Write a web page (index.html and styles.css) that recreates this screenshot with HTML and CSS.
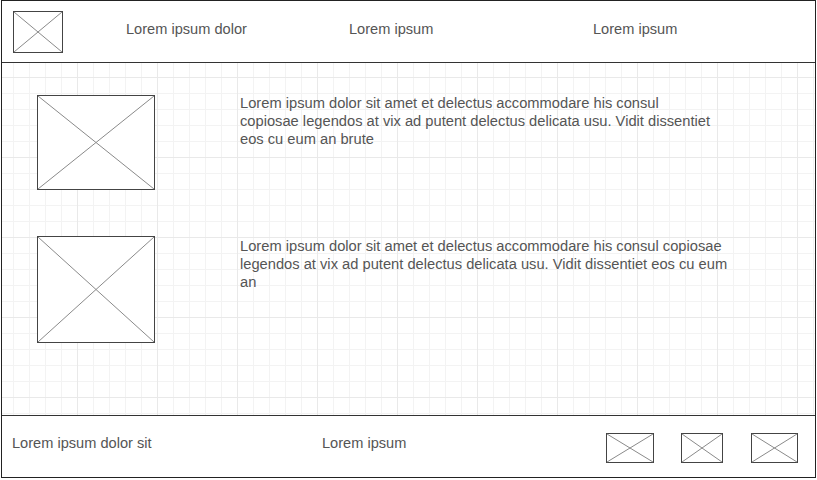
FILE: index.html
```html
<!DOCTYPE html>
<html>
<head>
<meta charset="utf-8">
<link rel="stylesheet" href="styles.css">
</head>
<body>
<div class="frame">
  <header class="header">
    <svg class="ph ph-logo" viewBox="0 0 100 100" preserveAspectRatio="none"><line x1="0" y1="0" x2="100" y2="100" vector-effect="non-scaling-stroke"/><line x1="100" y1="0" x2="0" y2="100" vector-effect="non-scaling-stroke"/></svg>
    <span class="nav-item nav-1">Lorem ipsum dolor</span>
    <span class="nav-item nav-2">Lorem ipsum</span>
    <span class="nav-item nav-3">Lorem ipsum</span>
  </header>
  <main class="main">
    <div class="row row-1">
      <svg class="ph ph-img1" viewBox="0 0 100 100" preserveAspectRatio="none"><line x1="0" y1="0" x2="100" y2="100" vector-effect="non-scaling-stroke"/><line x1="100" y1="0" x2="0" y2="100" vector-effect="non-scaling-stroke"/></svg>
      <p class="text text-1">Lorem ipsum dolor sit amet et delectus accommodare his consul copiosae legendos at vix ad putent delectus delicata usu. Vidit dissentiet eos cu eum an brute</p>
    </div>
    <div class="row row-2">
      <svg class="ph ph-img2" viewBox="0 0 100 100" preserveAspectRatio="none"><line x1="0" y1="0" x2="100" y2="100" vector-effect="non-scaling-stroke"/><line x1="100" y1="0" x2="0" y2="100" vector-effect="non-scaling-stroke"/></svg>
      <p class="text text-2">Lorem ipsum dolor sit amet et delectus accommodare his consul copiosae legendos at vix ad putent delectus delicata usu. Vidit dissentiet eos cu eum an</p>
    </div>
  </main>
  <footer class="footer">
    <span class="foot-1">Lorem ipsum dolor sit</span>
    <span class="foot-2">Lorem ipsum</span>
    <svg class="ph ph-f1" viewBox="0 0 100 100" preserveAspectRatio="none"><line x1="0" y1="0" x2="100" y2="100" vector-effect="non-scaling-stroke"/><line x1="100" y1="0" x2="0" y2="100" vector-effect="non-scaling-stroke"/></svg>
    <svg class="ph ph-f2" viewBox="0 0 100 100" preserveAspectRatio="none"><line x1="0" y1="0" x2="100" y2="100" vector-effect="non-scaling-stroke"/><line x1="100" y1="0" x2="0" y2="100" vector-effect="non-scaling-stroke"/></svg>
    <svg class="ph ph-f3" viewBox="0 0 100 100" preserveAspectRatio="none"><line x1="0" y1="0" x2="100" y2="100" vector-effect="non-scaling-stroke"/><line x1="100" y1="0" x2="0" y2="100" vector-effect="non-scaling-stroke"/></svg>
  </footer>
</div>
</body>
</html>
```
FILE: styles.css
```css
html, body {
  margin: 0;
  padding: 0;
  background: #ffffff;
}
body {
  font-family: "Liberation Sans", Arial, sans-serif;
  color: #555555;
}
.frame {
  box-sizing: border-box;
  margin-left: 1px;
  width: 815px;
  height: 478px;
  border: 1px solid #222222;
  display: flex;
  flex-direction: column;
}
.ph {
  box-sizing: border-box;
  display: block;
  flex: none;
  border: 1px solid #444444;
  background: #ffffff;
  overflow: visible;
}
.ph line {
  stroke: #8a8a8a;
  stroke-width: 1;
}
.header {
  box-sizing: border-box;
  height: 62px;
  border-bottom: 1px solid #333333;
  display: flex;
  align-items: center;
  font-size: 14.6px;
  flex: none;
}
.ph-logo {
  width: 50px;
  height: 42px;
  margin-left: 11px;
}
.nav-item {
  display: block;
  flex: none;
  margin-top: -6px;
}
.nav-1 {
  margin-left: 63px;
  width: 223px;
}
.nav-2 {
  width: 244px;
}
.main {
  box-sizing: border-box;
  height: 352px;
  flex: none;
  padding: 32px 0 0 35px;
  display: flex;
  flex-direction: column;
  gap: 46px;
  background-color: #ffffff;
  background-image:
    linear-gradient(to right, #e9e9e9 1px, transparent 1px),
    linear-gradient(to bottom, #e9e9e9 1px, transparent 1px),
    linear-gradient(to right, #f3f3f3 1px, transparent 1px),
    linear-gradient(to bottom, #f3f3f3 1px, transparent 1px);
  background-size: 80px 80px, 80px 80px, 16px 16px, 16px 16px;
  background-position: 75px 0, 0 14px, 11px 0, 0 14px;
}
.row {
  display: flex;
  align-items: flex-start;
  gap: 85px;
}
.ph-img1 {
  width: 118px;
  height: 95px;
}
.ph-img2 {
  width: 118px;
  height: 107px;
}
.text {
  margin: 0;
  font-size: 14.7px;
  line-height: 18px;
}
.text-1 {
  width: 478px;
  margin-top: -1px;
}
.text-2 {
  width: 500px;
  margin-top: 1px;
}
.footer {
  box-sizing: border-box;
  flex: 1;
  border-top: 1px solid #333333;
  display: flex;
  align-items: center;
  font-size: 14.6px;
}
.foot-1 {
  display: block;
  width: 310px;
  margin-left: 10px;
  margin-top: -8px;
}
.foot-2 {
  display: block;
  width: 284px;
  margin-top: -8px;
}
.ph-f1,
.ph-f2,
.ph-f3 {
  height: 30px;
  margin-top: 3px;
}
.ph-f1 {
  width: 48px;
}
.ph-f2 {
  width: 42px;
  margin-left: 27px;
}
.ph-f3 {
  width: 47px;
  margin-left: 28px;
}
```
